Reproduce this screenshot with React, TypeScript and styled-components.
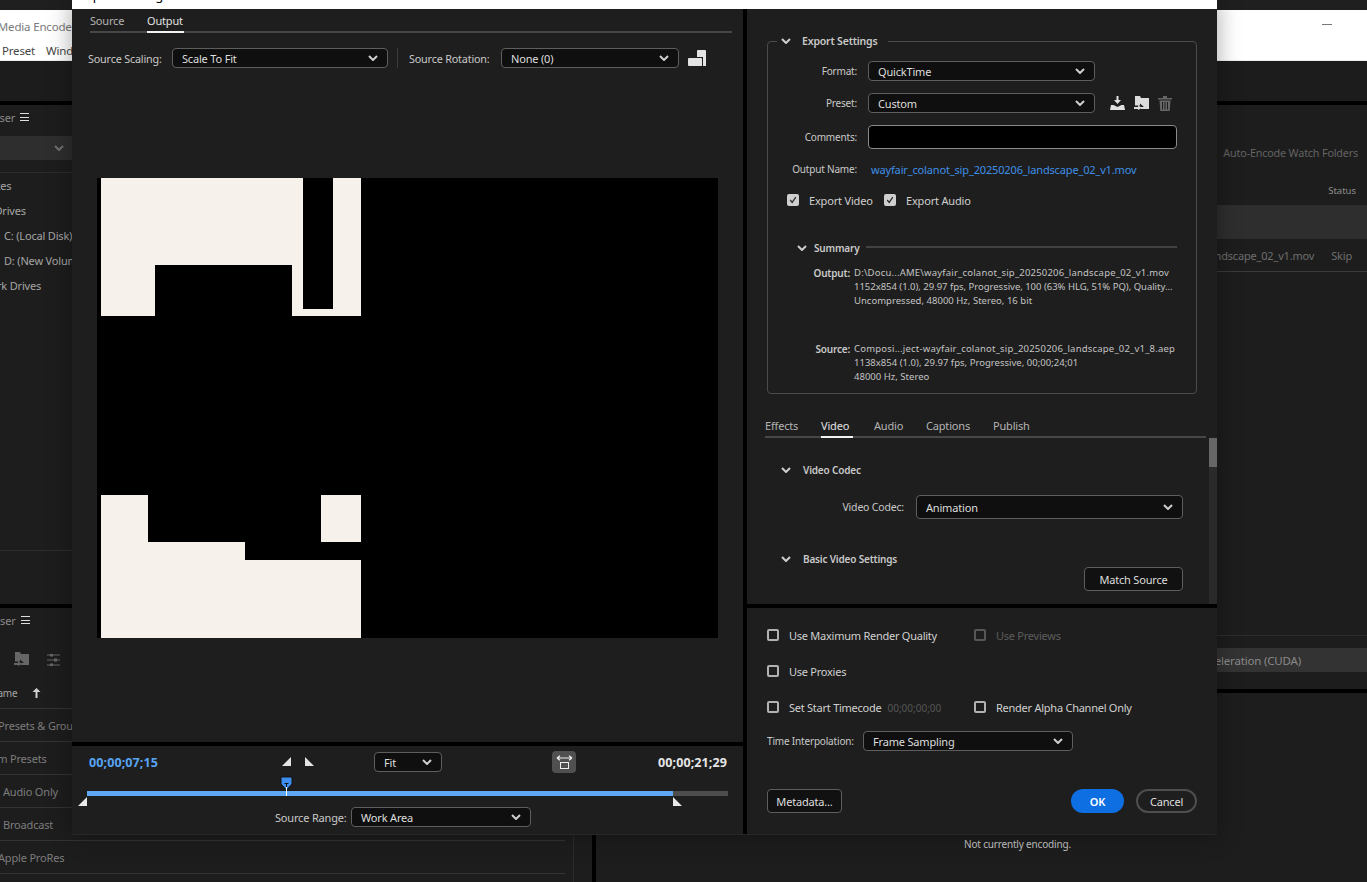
import React from "react";
import styled, { createGlobalStyle } from "styled-components";

const Global = createGlobalStyle`
  html, body { margin: 0; padding: 0; background: #1d1d1d; overflow: hidden; }
  * { box-sizing: border-box; }
  body { font-family: "Noto Sans", "Open Sans", sans-serif; font-size: 11px; letter-spacing: -0.18px; color: #c9c9c9; }
`;

const Screen = styled.div`
  position: relative;
  width: 1367px;
  height: 882px;
  overflow: hidden;
  background: #1d1d1d;
  display: flex;
  flex-direction: column;
`;

/* ---------- background application ---------- */
const TopStrip = styled.div`height: 10px; background: #1f1f1f; flex: none;`;
const TitleBar = styled.div`
  height: 51px; flex: none; background: #fff; border-bottom: 1px solid #eee; position: relative;
  display: flex; flex-direction: column; padding: 8px 0 0 0;
`;
const AppTitle = styled.div`font-size: 11.5px; color: #7a7a7a; line-height: 18px; white-space: nowrap; margin-left: -39px;`;
const AppMenu = styled.div`
  display: flex; gap: 11px; font-size: 11.5px; color: #444; line-height: 18px; margin: 6px 0 0 2px; white-space: nowrap;
`;
const Minimize = styled.div`position: absolute; right: 35px; top: 14px; width: 10px; height: 1px; background: #777;`;
const MenuGap = styled.div`height: 40px; flex: none; background: #1c1c1c;`;
const HBar = styled.div`height: 4px; flex: none; background: #000;`;
const Workspace = styled.div`flex: 1; display: flex; margin-left: -100px; min-height: 0;`;
const LeftDock = styled.div`width: 692px; flex: none; display: flex; flex-direction: column;`;
const VBar = styled.div`width: 4px; flex: none; background: #000;`;
const RightDock = styled.div`flex: 1; display: flex; flex-direction: column; min-width: 0;`;
const MediaPanel = styled.div`height: 499px; flex: none; display: flex; flex-direction: column; background: #1d1d1d;`;
const PresetPanel = styled.div`flex: 1; display: flex; flex-direction: column; background: #1d1d1d;`;
const PanelTitle = styled.div`
  height: 24px; flex: none; display: flex; align-items: center; gap: 5px; padding: 0 0 0 40px;
  color: #8a8a8a; font-size: 11px; white-space: nowrap;
`;
const Burger = styled.span`
  width: 9px; height: 8px; border-top: 1px solid #ddd; border-bottom: 1px solid #ddd; position: relative;
  &::after { content: ""; position: absolute; left: 0; right: 0; top: 2.5px; height: 1px; background: #ddd; }
`;
const LocationDrop = styled.div`
  height: 24px; margin-top: 7px; flex: none; background: #2e2e2e; border-bottom: 0;
  display: flex; align-items: center; padding-left: 153px; color: #777;
`;
const BrowserList = styled.div`
  flex: 1; margin-top: 12px; border-top: 1px solid #2b2b2b;
  display: flex; flex-direction: column;
`;
const BrowserRow = styled.div<{ $x: number }>`
  height: 25px; flex: none; display: flex; align-items: center; padding-left: ${(p) => p.$x}px;
  font-size: 11px; color: #a5a5a5; white-space: nowrap;
`;
const PanelFoot = styled.div`height: 54px; flex: none; border-top: 1px solid #2e2e2e;`;
const PresetTools = styled.div`height: 39px; flex: none; display: flex; align-items: flex-end; gap: 18px; padding: 0 0 5px 114px;`;
const PresetBody = styled.div`width: 674px; flex: 1; border-right: 1px solid #2b2b2b; display: flex; flex-direction: column;`;
const PresetHead = styled.div`
  width: 665px; height: 38px; flex: none; display: flex; align-items: center; gap: 15px; padding: 6px 0 0 90px;
  font-size: 10px; color: #a5a5a5; border-bottom: 1px solid #333;
`;
const PresetRow = styled.div<{ $x: number }>`
  width: 665px; height: 33px; flex: none; display: flex; align-items: center; padding: 1px 0 0 ${(p) => p.$x}px;
  font-size: 11px; color: #7c7c7c; border-bottom: 1px solid #333; white-space: nowrap;
`;
const QueuePanel = styled.div`height: 584px; flex: none; display: flex; flex-direction: column; background: #1d1d1d;`;
const QueueTabs = styled.div`height: 24px; margin-top: 35px; flex: none; display: flex; align-items: center; justify-content: flex-end; padding-right: 9px; font-size: 10.8px; color: #636363; white-space: nowrap;`;
const QueueHead = styled.div`height: 16px; margin-top: 18px; flex: none; display: flex; align-items: center; justify-content: flex-end; padding-right: 11px; font-size: 9.5px; letter-spacing: 0; color: #8f8f8f;`;
const QueueGroup = styled.div`height: 34px; margin-top: 7px; flex: none; background: #2e2e2e;`;
const QueueItem = styled.div`
  height: 33px; flex: none; display: flex; align-items: center; justify-content: flex-end; gap: 17px; padding-right: 15px;
  border-bottom: 1px solid #3a3a3a; font-size: 11px; color: #6d6d6d; white-space: nowrap;
`;
const RendererBlock = styled.div`margin-top: 363px; border-top: 1px solid #2d2d2d; padding-top: 12px; flex: none;`;
const RendererRow = styled.div`
  height: 24px; background: #333; display: flex; align-items: center; justify-content: flex-end; padding-right: 66px;
  font-size: 11.5px; color: #8a8a8a; white-space: nowrap;
`;
const EncodePanel = styled.div`flex: 1; background: #1d1d1d; padding: 144px 0 0 368px; font-size: 10px; color: #c4c4c4; white-space: nowrap;`;

/* ---------- dialog ---------- */
const Dialog = styled.div`
  position: absolute; left: 72px; top: 0; width: 1145px; height: 835px; display: flex; flex-direction: column;
  background: #1e1e1e; box-shadow: 0 0 22px rgba(0, 0, 0, 0.35); border-bottom: 1px solid #272727;
`;
const DialogHeader = styled.div`
  height: 9px; flex: none; background: #fff; overflow: hidden; padding-left: 7px;
  font-size: 13px; line-height: 14px; color: #000; white-space: nowrap;
`;
const HeaderText = styled.div`margin-top: -12px;`;
const DialogBody = styled.div`flex: 1; display: flex; min-height: 0;`;
const PreviewCol = styled.div`width: 671px; flex: none; display: flex; flex-direction: column;`;
const SettingsCol = styled.div`flex: 1; display: flex; flex-direction: column; min-width: 0;`;
const PreviewPane = styled.div`height: 733px; flex: none;`;

const TabStrip = styled.div<{ $left: number; $right: number; $top?: number }>`
  display: flex; gap: 24px; height: 24px; flex: none; margin: ${(p) => p.$top ?? 0}px ${(p) => p.$right}px 0 ${(p) => p.$left}px;
  border-bottom: 2px solid #474747;
`;
const Tab = styled.div<{ $on?: boolean; $w: number; $pull?: number }>`
  width: ${(p) => p.$w}px; height: 24px; padding-top: 3px; line-height: 18px; font-size: 11px; white-space: nowrap;
  margin-right: ${(p) => -(p.$pull ?? 0)}px;
  color: ${(p) => (p.$on ? "#e2e2e2" : "#b4b4b4")};
  border-bottom: 2px solid ${(p) => (p.$on ? "#f2f2f2" : "transparent")};
`;
const SourceBar = styled.div`display: flex; align-items: center; height: 20px; margin: 15px 0 0 16px;`;
const Label = styled.div<{ $w: number; $right?: boolean; $fs?: number }>`
  width: ${(p) => p.$w}px; flex: none; font-size: ${(p) => p.$fs ?? 11}px; color: #c9c9c9; white-space: nowrap;
  text-align: ${(p) => (p.$right ? "right" : "left")};
`;
const BarSep = styled.div`width: 1px; height: 20px; background: #3c3c3c; margin: 0 11px 0 9px; flex: none;`;
const SelectBox = styled.div<{ $w: number; $h?: number }>`
  width: ${(p) => p.$w}px; height: ${(p) => p.$h ?? 20}px; flex: none; background: #0f0f0f; border: 1px solid #5e5e5e;
  border-radius: 4px; display: flex; align-items: center; justify-content: space-between; padding: 0 9px 0 9px;
  font-size: 11px; color: #dedede; white-space: nowrap;
`;
const VideoFrame = styled.div`width: 621px; height: 460px; margin: 110px 0 0 25px; background: #000;`;

const Transport = styled.div`flex: 1; display: flex; flex-direction: column;`;
const TransportTop = styled.div`display: flex; align-items: center; height: 22px; margin-top: 5px; padding: 0 16px 0 17px;`;
const Timecode = styled.div<{ $blue?: boolean; $w?: number }>`
  width: ${(p) => (p.$w ? `${p.$w}px` : "auto")}; flex: none; font-size: 12.5px; font-weight: 700; white-space: nowrap; letter-spacing: 0.1px;
  color: ${(p) => (p.$blue ? "#58a4f5" : "#e6e6e6")};
`;
const MarkGroup = styled.div`width: 32px; flex: none; margin-right: 60px; height: 10px; margin-top: -1px; line-height: 0;`;
const FitToggle = styled.div`
  width: 24px; height: 22px; flex: none; margin-left: 110px; border-radius: 4px; background: #505050;
  display: flex; align-items: center; justify-content: center;
`;
const Spacer = styled.div`flex: 1;`;
const Scrub = styled.div`position: relative; height: 30px; margin-top: 4px; flex: none;`;
const Track = styled.div`position: absolute; left: 15px; top: 14px; width: 641px; height: 5px; background: #4d4d4d;`;
const TrackFill = styled.div`height: 100%; background: #5ea7f5;`;
const ScrubHandle = styled.div<{ $x: number; $y: number }>`position: absolute; left: ${(p) => p.$x}px; top: ${(p) => p.$y}px; line-height: 0;`;
const RangeRow = styled.div`display: flex; align-items: center; height: 20px; padding-left: 203px; flex: none;`;

const UpperPane = styled.div`height: 595px; flex: none; display: flex; flex-direction: column; padding-top: 24px;`;
const ExportSet = styled.fieldset`
  margin: 0 20px; padding: 0 0 9px 0; border: 1px solid #4b4b4b; border-radius: 4px; flex: none; min-width: 0;
`;
const SetLegend = styled.legend`
  margin-left: 9px; padding: 0 10px 0 4px; height: 16px; display: flex; align-items: center; gap: 11px;
  font-size: 10.5px; font-weight: 600; color: #c9c9c9; white-space: nowrap;
`;
const FormRow = styled.div<{ $top: number; $h?: number }>`
  display: flex; align-items: center; gap: 11px; margin-top: ${(p) => p.$top}px; height: ${(p) => p.$h ?? 20}px;
`;
const PresetIcons = styled.div`display: flex; align-items: center; gap: 9px; margin-left: 4px;`;
const CommentInput = styled.div`width: 309px; height: 24px; background: #000; border: 1px solid #8a8a8a; border-radius: 4px;`;
const OutputLink = styled.div`font-size: 11px; letter-spacing: -0.15px; color: #3f8fe6; padding-left: 3px; white-space: nowrap;`;
const ExportChecks = styled.div`display: flex; height: 20px; margin: 11px 0 0 19px; align-items: center;`;
const CheckItem = styled.div<{ $w?: number }>`
  display: flex; align-items: center; gap: 10px; width: ${(p) => (p.$w ? `${p.$w}px` : "auto")}; flex: none;
  font-size: 11px; color: #d0d0d0; white-space: nowrap;
`;
const CheckBox = styled.span<{ $on?: boolean; $off?: boolean }>`
  width: 12px; height: 12px; flex: none; border-radius: 2px; display: flex; align-items: center; justify-content: center;
  background: ${(p) => (p.$on ? "#cfcfcf" : "transparent")};
  border: 2px solid ${(p) => (p.$on ? "#cfcfcf" : p.$off ? "#575757" : "#b2b2b2")};
`;
const SummaryHead = styled.div`display: flex; height: 16px; margin: 30px 19px 0 29px; align-items: center; gap: 7px; font-size: 10px; font-weight: 600; color: #c9c9c9; white-space: nowrap;`;
const SummaryLine = styled.div`flex: 1; height: 2px; background: #424242; margin: -3px 0 0 -1px;`;
const SummaryBlock = styled.div<{ $top: number }>`display: flex; gap: 4px; margin-top: ${(p) => p.$top}px;`;
const SummaryKey = styled.div`width: 82px; flex: none; text-align: right; font-size: 10px; font-weight: 600; line-height: 14px; color: #c9c9c9;`;
const SummaryVal = styled.div<{ $ls: number }>`font-size: 9.5px; line-height: 14px; color: #c4c4c4; white-space: nowrap; letter-spacing: ${(p) => p.$ls}px;`;
const ScrollArea = styled.div`flex: 1; display: flex; min-height: 0;`;
const ScrollContent = styled.div`flex: 1; padding: 24px 0 0 34px; display: flex; flex-direction: column;`;
const ScrollTrack = styled.div`width: 8px; flex: none; background: #2a2a2a;`;
const ScrollThumb = styled.div`height: 29px; background: #666;`;
const SectionHead = styled.div<{ $top?: number }>`
  display: flex; height: 16px; flex: none; align-items: center; gap: 12px; margin-top: ${(p) => p.$top ?? 0}px;
  font-size: 10px; font-weight: 600; color: #c9c9c9; white-space: nowrap;
`;
const CodecRow = styled.div`display: flex; align-items: center; gap: 12px; margin-top: 17px; height: 24px;`;
const GhostBtn = styled.div<{ $w: number; $left?: number; $top?: number }>`
  width: ${(p) => p.$w}px; height: 24px; flex: none; background: #111; border: 1px solid #5e5e5e; border-radius: 4px;
  margin: ${(p) => p.$top ?? 0}px 0 0 ${(p) => p.$left ?? 0}px;
  display: flex; align-items: center; justify-content: center; font-size: 11px; color: #dedede; white-space: nowrap;
`;

const LowerPane = styled.div`flex: 1; padding: 15px 20px 0 20px; display: flex; flex-direction: column;`;
const OptionRow = styled.div<{ $top?: number }>`display: flex; align-items: center; height: 24px; flex: none; margin-top: ${(p) => p.$top ?? 0}px;`;
const OptionCol = styled.div`width: 207px; flex: none;`;
const OptionLabel = styled.span<{ $dim?: boolean }>`letter-spacing: -0.25px; color: ${(p) => (p.$dim ? "#5c5c5c" : "#d0d0d0")};`;
const Ghost = styled.span`font-size: 10px; letter-spacing: 0; color: #555; margin-left: 6px;`;
const ActionRow = styled.div`display: flex; align-items: center; margin-top: 38px; height: 24px;`;
const PrimaryBtn = styled.div`
  width: 53px; height: 24px; border-radius: 12px; background: #0e6fe3; color: #fff; font-size: 11px; font-weight: 600;
  display: flex; align-items: center; justify-content: center;
`;
const OutlineBtn = styled.div`
  width: 61px; height: 24px; border-radius: 12px; border: 2px solid #4e4e4e; color: #dedede; font-size: 11px; margin-left: 12px;
  display: flex; align-items: center; justify-content: center;
`;

/* ---------- drawings ---------- */
const Chevron = ({ c = "#cfcfcf", w = 10 }: { c?: string; w?: number }) => (
  <svg width={w} height={6} viewBox="0 0 10 6" style={{ flex: "none" }}>
    <path d="M1 1 L5 5 L9 1" fill="none" stroke={c} strokeWidth="2" />
  </svg>
);
const Check = () => (
  <svg width="10" height="10" viewBox="0 0 10 10">
    <path d="M1.5 5 L4 8 L8.5 1.5" fill="none" stroke="#2c2c2c" strokeWidth="1.6" />
  </svg>
);
const RotateIcon = () => (
  <svg width="18" height="16" viewBox="0 0 18 16" style={{ flex: "none", marginLeft: 9 }}>
    <path d="M1 8 H13 Q14 8 14 9 V16 H1 Q0 16 0 15 V9 Q0 8 1 8Z" fill="#e4e4e4" />
    <path d="M10 0 H17 Q18 0 18 1 V16 H15 V7 H9 V1 Q9 0 10 0Z" fill="#e4e4e4" />
  </svg>
);
const SaveIcon = () => (
  <svg width="15" height="14" viewBox="0 0 15 14">
    <path d="M6.5 0 H8.5 V4 H11 L7.5 8 L4 4 H6.5Z" fill="#e0e0e0" />
    <path d="M1 9 H3.5 L7.5 11 L11.5 9 H14 L15 14 H0Z" fill="#e0e0e0" />
  </svg>
);
const ImportIcon = ({ c = "#dcdcdc" }: { c?: string }) => (
  <svg width="15" height="14" viewBox="0 0 15 14">
    <path d="M1 0 H6 L7 2 H15 V13 H7 V11 H10 L6 7.5 V9.5 H1Z" fill={c} />
    <path d="M0 11 H4 V9 L8 12 L4 14 V13 H0Z" fill={c} />
  </svg>
);
const TrashIcon = () => (
  <svg width="14" height="15" viewBox="0 0 14 15">
    <path d="M0 2 H14 V3.5 H0Z M5 0 H9 V2 H5Z" fill="#666" />
    <path d="M1.5 4.5 H12.5 L11.7 15 H2.3Z M4 6 V13.5 H5 V6Z M6.5 6 V13.5 H7.5 V6Z M9 6 V13.5 H10 V6Z" fill="#666" fillRule="evenodd" />
  </svg>
);
const SlidersIcon = () => (
  <svg width="13" height="12" viewBox="0 0 13 12">
    <path d="M0 1 H13 M0 6 H13 M0 11 H13" stroke="#666" strokeWidth="1.2" />
    <path d="M3 0 H6 V2.5 H3Z M7 4.5 H10 V7.5 H7Z M3 9.5 H6 V12 H3Z" fill="#666" />
  </svg>
);
const UpArrow = () => (
  <svg width="9" height="10" viewBox="0 0 9 10">
    <path d="M3.5 10 V4 H0.5 L4.5 0 L8.5 4 H5.5 V10Z" fill="#cfcfcf" />
  </svg>
);
const InOutMarks = () => (
  <svg width="32" height="10" viewBox="0 0 32 10">
    <path d="M9 0 V9 H0Z" fill="#e4e4e4" />
    <path d="M23 0 V9 H32Z" fill="#e4e4e4" />
  </svg>
);
const LeftMark = () => (
  <svg width="9" height="9" viewBox="0 0 9 9"><path d="M9 0 V9 H0Z" fill="#e8e8e8" /></svg>
);
const RightMark = () => (
  <svg width="9" height="9" viewBox="0 0 9 9"><path d="M0 0 V9 H9Z" fill="#e8e8e8" /></svg>
);
const Playhead = () => (
  <svg width="13" height="21" viewBox="0 0 13 21">
    <path d="M1 1 H12 V8 L6.5 14 L1 8Z" fill="#3e8ef0" stroke="#111" strokeWidth="1" />
    <path d="M4.5 7.5 H8.5 M6.5 7.5 V11" stroke="#111" strokeWidth="1" />
    <path d="M6.5 11 V20" stroke="#fff" strokeWidth="1" />
  </svg>
);
const FitIcon = () => (
  <svg width="17" height="14" viewBox="0 0 17 14">
    <path d="M1 3 H16 M1 3 L4 0.8 M1 3 L4 5.2 M16 3 L13 0.8 M16 3 L13 5.2" stroke="#eee" strokeWidth="1.2" fill="none" />
    <rect x="4.5" y="7.5" width="8" height="6" fill="none" stroke="#eee" strokeWidth="1" />
  </svg>
);
const Frame = () => (
  <svg width="621" height="460" viewBox="0 0 621 460" style={{ display: "block" }}>
    <path d="M4 0 H206 V131 H236 V0 H264 V138 H195 V87 H58 V138 H4Z" fill="#f6f2eb" />
    <path d="M4 317 H51 V364 H224 V317 H264 V364 H148 V382 H264 V460 H4Z" fill="#f6f2eb" />
  </svg>
);

const Select = ({ w, h, v }: { w: number; h?: number; v: string }) => (
  <SelectBox $w={w} $h={h}>
    {v}
    <Chevron />
  </SelectBox>
);

export default function App() {
  return (
    <Screen>
      <Global />
      <TopStrip />
      <TitleBar>
        <AppTitle>Adobe Media Encoder</AppTitle>
        <AppMenu>
          <span>Preset</span>
          <span>Window</span>
        </AppMenu>
        <Minimize />
      </TitleBar>
      <MenuGap />
      <HBar />
      <Workspace>
        <LeftDock>
          <MediaPanel>
            <PanelTitle>
              Media Browser <Burger />
            </PanelTitle>
            <LocationDrop>
              <Chevron c="#6f6f6f" w={12} />
            </LocationDrop>
            <BrowserList>
              <BrowserRow $x={66}>Favorites</BrowserRow>
              <BrowserRow $x={66}>Local Drives</BrowserRow>
              <BrowserRow $x={104}>C: (Local Disk)</BrowserRow>
              <BrowserRow $x={104}>D: (New Volume)</BrowserRow>
              <BrowserRow $x={64}>Network Drives</BrowserRow>
            </BrowserList>
            <PanelFoot />
          </MediaPanel>
          <HBar />
          <PresetPanel>
            <PanelTitle>
              Preset Browser <Burger />
            </PanelTitle>
            <PresetTools>
              <ImportIcon c="#666" />
              <SlidersIcon />
            </PresetTools>
            <PresetBody>
              <PresetHead>
                Name <UpArrow />
              </PresetHead>
              <PresetRow $x={72}>User Presets &amp; Groups</PresetRow>
              <PresetRow $x={71}>System Presets</PresetRow>
              <PresetRow $x={103}>Audio Only</PresetRow>
              <PresetRow $x={103}>Broadcast</PresetRow>
              <PresetRow $x={98}>Apple ProRes</PresetRow>
            </PresetBody>
          </PresetPanel>
        </LeftDock>
        <VBar />
        <RightDock>
          <QueuePanel>
            <QueueTabs>Auto-Encode Watch Folders</QueueTabs>
            <QueueHead>Status</QueueHead>
            <QueueGroup />
            <QueueItem>
              wayfair_colanot_sip_20250206_landscape_02_v1.mov
              <span>Skip</span>
            </QueueItem>
            <RendererBlock>
              <RendererRow>Mercury Playback Engine GPU Acceleration (CUDA)</RendererRow>
            </RendererBlock>
          </QueuePanel>
          <HBar />
          <EncodePanel>Not currently encoding.</EncodePanel>
        </RightDock>
      </Workspace>

      <Dialog>
        <DialogHeader>
          <HeaderText>Export Settings</HeaderText>
        </DialogHeader>
        <DialogBody>
          <PreviewCol>
            <PreviewPane>
              <TabStrip $left={18} $right={11}>
                <Tab $w={33}>Source</Tab>
                <Tab $on $w={37}>Output</Tab>
              </TabStrip>
              <SourceBar>
                <Label $w={84} $fs={10.8}>Source Scaling:</Label>
                <Select w={216} v="Scale To Fit" />
                <BarSep />
                <Label $w={92} $fs={10.8}>Source Rotation:</Label>
                <Select w={178} v="None (0)" />
                <RotateIcon />
              </SourceBar>
              <VideoFrame>
                <Frame />
              </VideoFrame>
            </PreviewPane>
            <HBar />
            <Transport>
              <TransportTop>
                <Timecode $blue $w={193}>00;00;07;15</Timecode>
                <MarkGroup>
                  <InOutMarks />
                </MarkGroup>
                <Select w={68} v="Fit" />
                <FitToggle>
                  <FitIcon />
                </FitToggle>
                <Spacer />
                <Timecode>00;00;21;29</Timecode>
              </TransportTop>
              <Scrub>
                <Track>
                  <TrackFill style={{ width: `${(586 / 641) * 100}%` }} />
                </Track>
                <ScrubHandle $x={6} $y={20}>
                  <LeftMark />
                </ScrubHandle>
                <ScrubHandle $x={601} $y={20}>
                  <RightMark />
                </ScrubHandle>
                <ScrubHandle $x={208} $y={-1}>
                  <Playhead />
                </ScrubHandle>
              </Scrub>
              <RangeRow>
                <Label $w={76}>Source Range:</Label>
                <Select w={180} v="Work Area" />
              </RangeRow>
            </Transport>
          </PreviewCol>
          <VBar />
          <SettingsCol>
            <UpperPane>
              <ExportSet>
                <SetLegend>
                  <Chevron />
                  Export Settings
                </SetLegend>
                <FormRow $top={12}>
                  <Label $w={89} $right $fs={10}>Format:</Label>
                  <Select w={227} v="QuickTime" />
                </FormRow>
                <FormRow $top={12}>
                  <Label $w={89} $right $fs={10}>Preset:</Label>
                  <Select w={227} v="Custom" />
                  <PresetIcons>
                    <SaveIcon />
                    <ImportIcon />
                    <TrashIcon />
                  </PresetIcons>
                </FormRow>
                <FormRow $top={12} $h={24}>
                  <Label $w={89} $right $fs={10}>Comments:</Label>
                  <CommentInput />
                </FormRow>
                <FormRow $top={10}>
                  <Label $w={89} $right $fs={10}>Output Name:</Label>
                  <OutputLink>wayfair_colanot_sip_20250206_landscape_02_v1.mov</OutputLink>
                </FormRow>
                <ExportChecks>
                  <CheckItem $w={97}>
                    <CheckBox $on>
                      <Check />
                    </CheckBox>
                    Export Video
                  </CheckItem>
                  <CheckItem>
                    <CheckBox $on>
                      <Check />
                    </CheckBox>
                    Export Audio
                  </CheckItem>
                </ExportChecks>
                <SummaryHead>
                  <Chevron />
                  Summary
                  <SummaryLine />
                </SummaryHead>
                <SummaryBlock $top={10}>
                  <SummaryKey>Output:</SummaryKey>
                  <div>
                    <SummaryVal $ls={0.2}>D:\Docu...AME\wayfair_colanot_sip_20250206_landscape_02_v1.mov</SummaryVal>
                    <SummaryVal $ls={-0.02}>1152x854 (1.0), 29.97 fps, Progressive, 100 (63% HLG, 51% PQ), Quality...</SummaryVal>
                    <SummaryVal $ls={0.02}>Uncompressed, 48000 Hz, Stereo, 16 bit</SummaryVal>
                  </div>
                </SummaryBlock>
                <SummaryBlock $top={34}>
                  <SummaryKey>Source:</SummaryKey>
                  <div>
                    <SummaryVal $ls={0.2}>Composi...ject-wayfair_colanot_sip_20250206_landscape_02_v1_8.aep</SummaryVal>
                    <SummaryVal $ls={0.02}>1138x854 (1.0), 29.97 fps, Progressive, 00;00;24;01</SummaryVal>
                    <SummaryVal $ls={0.02}>48000 Hz, Stereo</SummaryVal>
                  </div>
                </SummaryBlock>
              </ExportSet>
              <TabStrip $left={18} $right={11} $top={20}>
                <Tab $w={32}>Effects</Tab>
                <Tab $on $w={32} $pull={3}>Video</Tab>
                <Tab $w={28}>Audio</Tab>
                <Tab $w={43}>Captions</Tab>
                <Tab $w={36}>Publish</Tab>
              </TabStrip>
              <ScrollArea>
                <ScrollContent>
                  <SectionHead>
                    <Chevron />
                    Video Codec
                  </SectionHead>
                  <CodecRow>
                    <Label $w={123} $right $fs={10.5}>Video Codec:</Label>
                    <Select w={267} h={24} v="Animation" />
                  </CodecRow>
                  <SectionHead $top={32}>
                    <Chevron />
                    Basic Video Settings
                  </SectionHead>
                  <GhostBtn $w={99} $left={303} $top={0}>Match Source</GhostBtn>
                </ScrollContent>
                <ScrollTrack>
                  <ScrollThumb />
                </ScrollTrack>
              </ScrollArea>
            </UpperPane>
            <HBar />
            <LowerPane>
              <OptionRow>
                <OptionCol>
                  <CheckItem>
                    <CheckBox />
                    <OptionLabel>Use Maximum Render Quality</OptionLabel>
                  </CheckItem>
                </OptionCol>
                <CheckItem>
                  <CheckBox $off />
                  <OptionLabel $dim>Use Previews</OptionLabel>
                </CheckItem>
              </OptionRow>
              <OptionRow $top={12}>
                <CheckItem>
                  <CheckBox />
                  <OptionLabel>Use Proxies</OptionLabel>
                </CheckItem>
              </OptionRow>
              <OptionRow $top={12}>
                <OptionCol>
                  <CheckItem>
                    <CheckBox />
                    <OptionLabel>
                      Set Start Timecode
                      <Ghost>00;00;00;00</Ghost>
                    </OptionLabel>
                  </CheckItem>
                </OptionCol>
                <CheckItem>
                  <CheckBox />
                  <OptionLabel>Render Alpha Channel Only</OptionLabel>
                </CheckItem>
              </OptionRow>
              <FormRow $top={12}>
                <Label $w={85} $fs={10}>Time Interpolation:</Label>
                <Select w={210} v="Frame Sampling" />
              </FormRow>
              <ActionRow>
                <GhostBtn $w={75}>Metadata...</GhostBtn>
                <Spacer />
                <PrimaryBtn>OK</PrimaryBtn>
                <OutlineBtn>Cancel</OutlineBtn>
              </ActionRow>
            </LowerPane>
          </SettingsCol>
        </DialogBody>
      </Dialog>
    </Screen>
  );
}
